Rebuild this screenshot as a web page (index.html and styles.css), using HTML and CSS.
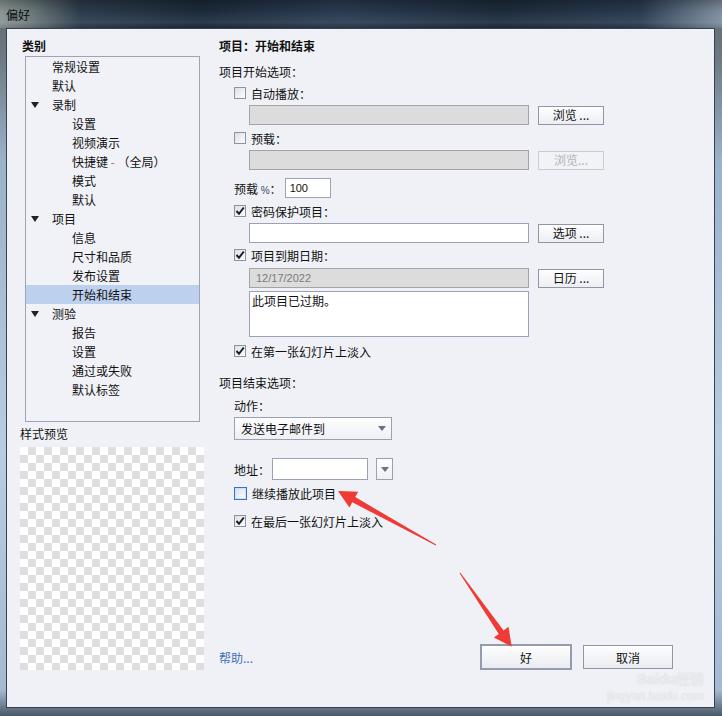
FILE: index.html
```html
<!DOCTYPE html>
<html lang="zh-CN">
<head>
    <meta charset="UTF-8">
    <title>偏好</title>
    <link rel="stylesheet" href="styles.css">
</head>
<body>
    <div class="window">
        <div class="titlebar"><span class="title">偏好</span></div>
        <div class="client">
            <div class="side">
                <div class="side-title">类别</div>
                <ul class="tree">
                    <li class="lvl1">常规设置</li>
                    <li class="lvl1">默认</li>
                    <li class="lvl1 open">录制</li>
                    <li class="lvl2">设置</li>
                    <li class="lvl2">视频演示</li>
                    <li class="lvl2">快捷键 <span class="dash">-</span> （全局）</li>
                    <li class="lvl2">模式</li>
                    <li class="lvl2">默认</li>
                    <li class="lvl1 open">项目</li>
                    <li class="lvl2">信息</li>
                    <li class="lvl2">尺寸和品质</li>
                    <li class="lvl2">发布设置</li>
                    <li class="lvl2 selected">开始和结束</li>
                    <li class="lvl1 open">测验</li>
                    <li class="lvl2">报告</li>
                    <li class="lvl2">设置</li>
                    <li class="lvl2">通过或失败</li>
                    <li class="lvl2">默认标签</li>
                </ul>
                <div class="preview-label">样式预览</div>
                <div class="preview"></div>
            </div>

            <div class="main">
                <div class="heading">项目：开始和结束</div>

                <div class="section-label mt10">项目开始选项：</div>
                <div class="check-row mt5"><span class="check"></span>自动播放：</div>
                <div class="field-row mt4">
                    <div class="input disabled"></div>
                    <button class="btn">浏览 ...</button>
                </div>
                <div class="check-row mt5"><span class="check"></span>预载：</div>
                <div class="field-row mt4">
                    <div class="input disabled"></div>
                    <button class="btn" disabled>浏览...</button>
                </div>
                <div class="preload-row mt8">
                    <span>预载 <span class="pct">%</span>：</span>
                    <div class="input small">100</div>
                </div>
                <div class="check-row mt5"><span class="check checked"><svg viewBox="0 0 10 10"><path d="M1.5 5 L4 7.8 L8.8 1.5"/></svg></span>密码保护项目：</div>
                <div class="field-row mt4">
                    <div class="input"></div>
                    <button class="btn">选项 ...</button>
                </div>
                <div class="check-row mt4"><span class="check checked"><svg viewBox="0 0 10 10"><path d="M1.5 5 L4 7.8 L8.8 1.5"/></svg></span>项目到期日期：</div>
                <div class="field-row mt5">
                    <div class="input disabled date">12/17/2022</div>
                    <button class="btn">日历 ...</button>
                </div>
                <div class="field-row mt3">
                    <div class="textarea">此项目已过期。</div>
                </div>
                <div class="check-row mt6"><span class="check checked"><svg viewBox="0 0 10 10"><path d="M1.5 5 L4 7.8 L8.8 1.5"/></svg></span>在第一张幻灯片上淡入</div>

                <div class="section-label mt16">项目结束选项：</div>
                <div class="sub-label mt7">动作：</div>
                <div class="select mt3">
                    <span>发送电子邮件到</span>
                    <span class="arrow"></span>
                </div>
                <div class="address-row mt18">
                    <span>地址：</span>
                    <div class="input addr"></div>
                    <div class="drop"><span class="arrow"></span></div>
                </div>
                <div class="check-row mt5"><span class="check focus"></span>继续播放此项目</div>
                <div class="check-row mt12"><span class="check checked"><svg viewBox="0 0 10 10"><path d="M1.5 5 L4 7.8 L8.8 1.5"/></svg></span>在最后一张幻灯片上淡入</div>

                <div class="bottom-row">
                    <span class="help">帮助...</span>
                    <button class="dlg-btn default">好</button>
                    <button class="dlg-btn">取消</button>
                </div>
            </div>
        </div>

        <svg class="arrows" width="722" height="716" viewBox="0 0 722 716">
            <polygon points="338,491 358.1,491.8 355.2,497.1 436.2,544.6 435.8,545.4 352.3,502.3 349.4,507.6"/>
            <polygon points="511.7,646.7 508.5,626.8 503.6,630.4 460.4,572.7 459.6,573.3 498.8,633.9 493.9,637.4"/>
        </svg>
        <div class="watermark">
            <div class="wm-logo">Baidu经验</div>
            <div class="wm-url">jingyan.baidu.com</div>
        </div>
    </div>
</body>
</html>
```

FILE: styles.css
```css
body {
    margin: 0;
    font-family: "Noto Sans CJK SC", "Liberation Sans", sans-serif;
    font-size: 12px;
    color: #111;
}
.window {
    position: relative;
    width: 722px;
    height: 716px;
    box-sizing: border-box;
    padding: 0 7px 8px 6px;
    display: flex;
    flex-direction: column;
    background: linear-gradient(to bottom, #5d6870 0, #6e7b84 60px, #9ab2ca 160px, #b7cde4 450px, #a4bad2 690px, #4a5866 100%);
    overflow: hidden;
}
.titlebar {
    height: 28px;
    margin: 0 -7px 0 -6px;
    padding-left: 6px;
    display: flex;
    align-items: center;
    background:
        linear-gradient(to bottom, rgba(0, 0, 0, 0.25), rgba(0, 0, 0, 0) 40%, rgba(255, 255, 255, 0.08) 80%, rgba(0, 0, 0, 0.1)),
        linear-gradient(90deg, #8a9494 0, #6b7878 30px, #2c3b4b 80px, #1b2939 200px, #2a3b50 340px, #1c2a3a 500px, #293a4e 640px, #7e8e9e 100%);
}
.title {
    color: #0c0c0c;
    font-size: 12px;
}
.client {
    flex: 1;
    display: flex;
    background: #eff1f6;
    border: 1px solid #36424f;
}

/* left column */
.side {
    width: 212px;
    padding-top: 9px;
    display: flex;
    flex-direction: column;
}
.side-title {
    margin-left: 15px;
    font-weight: bold;
    line-height: 16px;
}
.tree {
    list-style: none;
    margin: 2px 0 0 18px;
    padding: 0;
    width: 175px;
    height: 366px;
    box-sizing: border-box;
    border: 1px solid #9ea4b6;
    background: #f0f2f7;
}
.tree li {
    height: 19px;
    line-height: 19px;
    position: relative;
    white-space: nowrap;
}
.tree .lvl1 {
    padding-left: 26px;
}
.tree .lvl2 {
    padding-left: 46px;
}
.tree .open::before {
    content: "";
    position: absolute;
    left: 5px;
    top: 7px;
    border-left: 4px solid transparent;
    border-right: 4px solid transparent;
    border-top: 6px solid #222;
}
.tree .selected {
    background: #bdd0ee;
}
.dash {
    color: #d0601e;
}
.preview-label {
    margin: 4px 0 0 13px;
    line-height: 16px;
}
.preview {
    margin: 5px 0 0 13px;
    width: 184px;
    height: 223px;
    background-color: #fff;
    background-image: conic-gradient(#dedede 25%, transparent 0 50%, #dedede 0 75%, transparent 0);
    background-size: 16px 16px;
}

/* right column */
.main {
    flex: 1;
    padding: 9px 41px 37px 0;
    display: flex;
    flex-direction: column;
}
.heading {
    font-weight: bold;
    line-height: 16px;
}
.section-label {
    line-height: 16px;
}
.sub-label {
    margin-left: 15px;
    line-height: 16px;
}
.check-row {
    margin-left: 15px;
    display: flex;
    align-items: center;
    height: 16px;
}
.check {
    width: 12px;
    height: 12px;
    box-sizing: border-box;
    margin-right: 5px;
    border: 1px solid #8c93a3;
    background: linear-gradient(135deg, #dcdfe5, #fdfdfd);
    display: flex;
    align-items: center;
    justify-content: center;
}
.check svg {
    width: 10px;
    height: 10px;
}
.check path {
    fill: none;
    stroke: #1e1e1e;
    stroke-width: 2;
}
.check.focus {
    border: 1px solid #2f74d0;
    width: 13px;
    height: 13px;
    box-shadow: inset 0 0 0 1px #cfe0f6;
}
.field-row {
    margin-left: 30px;
    display: flex;
    align-items: center;
    gap: 9px;
}
.input {
    width: 280px;
    height: 20px;
    box-sizing: border-box;
    border: 1px solid #9ba2b5;
    background: #fff;
    font-family: "Liberation Sans", sans-serif;
    font-size: 11px;
    line-height: 18px;
    padding-left: 4px;
}
.input.disabled {
    background: #dcdcdc;
    border-color: #a4a4a4;
}
.input.date {
    color: #7b7b7b;
    padding-left: 6px;
}
.btn {
    width: 66px;
    height: 19px;
    padding: 0;
    border: 1px solid #8f96a7;
    background: linear-gradient(#fefefe, #eceef2);
    font-family: "Noto Sans CJK SC", sans-serif;
    font-size: 12px;
    color: #111;
    line-height: 16px;
}
.btn:disabled {
    border-color: #c8cbd3;
    color: #b4b4b4;
    background: #f2f3f6;
}
.textarea {
    width: 280px;
    height: 46px;
    box-sizing: border-box;
    border: 1px solid #9ba2b5;
    background: #fff;
    padding: 1px 2px;
    line-height: 16px;
}
.preload-row {
    margin-left: 15px;
    display: flex;
    align-items: center;
    gap: 3px;
    height: 20px;
}
.pct {
    font-family: "Liberation Sans", sans-serif;
    font-size: 10px;
    color: #3a4a70;
}
.input.small {
    width: 46px;
}
.select {
    margin-left: 15px;
    width: 158px;
    height: 23px;
    box-sizing: border-box;
    border: 1px solid #9aa1b3;
    background: linear-gradient(#fdfdfe, #eef0f4);
    display: flex;
    align-items: center;
    justify-content: space-between;
    padding: 0 5px 0 6px;
}
.arrow {
    width: 0;
    height: 0;
    border-left: 4px solid transparent;
    border-right: 4px solid transparent;
    border-top: 5px solid #6a7283;
}
.address-row {
    margin-left: 15px;
    display: flex;
    align-items: center;
    height: 22px;
}
.input.addr {
    width: 96px;
    height: 22px;
    margin-left: 2px;
}
.drop {
    width: 17px;
    height: 22px;
    box-sizing: border-box;
    margin-left: 8px;
    border: 1px solid #9aa1b3;
    background: linear-gradient(#fdfdfe, #eef0f4);
    display: flex;
    align-items: center;
    justify-content: center;
}
.bottom-row {
    margin-top: auto;
    display: flex;
    align-items: center;
}
.help {
    color: #3d72b9;
    margin-right: auto;
}
.dlg-btn {
    width: 90px;
    height: 24px;
    padding: 0;
    border: 1px solid #8e95a7;
    background: linear-gradient(#fefefe, #eaecf1);
    font-family: "Noto Sans CJK SC", sans-serif;
    font-size: 12px;
    color: #111;
}
.dlg-btn.default {
    width: 92px;
    height: 26px;
    border: 2px solid #939bae;
    margin-right: 11px;
}
.mt3 { margin-top: 3px; }
.mt4 { margin-top: 4px; }
.mt5 { margin-top: 5px; }
.mt6 { margin-top: 6px; }
.mt7 { margin-top: 7px; }
.mt8 { margin-top: 8px; }
.mt10 { margin-top: 10px; }
.mt12 { margin-top: 12px; }
.mt16 { margin-top: 16px; }
.mt18 { margin-top: 18px; }

/* overlays from the screenshot */
.arrows {
    position: absolute;
    left: 0;
    top: 0;
    pointer-events: none;
}
.arrows polygon {
    fill: #ef3a36;
}
.watermark {
    position: absolute;
    right: 18px;
    top: 671px;
    pointer-events: none;
    color: rgba(255, 255, 255, 0.6);
    text-shadow: 0 0 1px rgba(130, 130, 130, 0.35);
    font-family: "Liberation Sans", "Noto Sans CJK SC", sans-serif;
    text-align: right;
}
.wm-logo {
    font-size: 14px;
    font-weight: bold;
    line-height: 16px;
}
.wm-url {
    font-size: 12px;
    line-height: 14px;
    margin-top: 2px;
}
```
